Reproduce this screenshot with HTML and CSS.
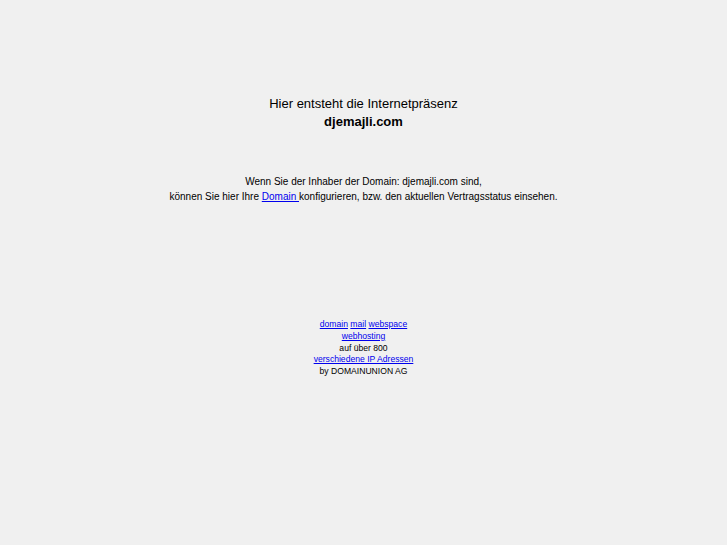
FILE: index.html
```html
<!DOCTYPE html>
<html>
<head>
<meta charset="utf-8">
<link rel="stylesheet" href="styles.css">
</head>
<body>
<div class="page">
  <div class="headline">
    <div class="title">Hier entsteht die Internetpräsenz</div>
    <div class="domain">djemajli.com</div>
  </div>
  <div class="info">
    <div>Wenn Sie der Inhaber der Domain: djemajli.com sind,</div>
    <div>können Sie hier Ihre <a href="#">Domain </a>konfigurieren, bzw. den aktuellen Vertragsstatus einsehen.</div>
  </div>
  <div class="footer">
    <div><a href="#">domain</a> <a href="#">mail</a> <a href="#">webspace </a></div>
    <div><a href="#">webhosting </a></div>
    <div>auf über 800</div>
    <div><a href="#">verschiedene IP Adressen</a></div>
    <div>by DOMAINUNION AG</div>
  </div>
</div>
</body>
</html>
```
FILE: styles.css
```css
html, body {
  margin: 0;
  padding: 0;
  background: #f0f0f0;
}
body {
  font-family: "Liberation Sans", Arial, sans-serif;
  color: #000;
}
.page {
  display: flex;
  flex-direction: column;
  align-items: center;
  text-align: center;
  padding-top: 95px;
}
a { color: #0000ee; text-decoration: underline; }
.headline { font-size: 13px; line-height: 17px; }
.domain { font-weight: bold; margin-top: 1px; }
.info { font-size: 10px; line-height: 15px; margin-top: 44px; }
.footer { font-size: 8.6px; line-height: 11.75px; margin-top: 115px; }
```
